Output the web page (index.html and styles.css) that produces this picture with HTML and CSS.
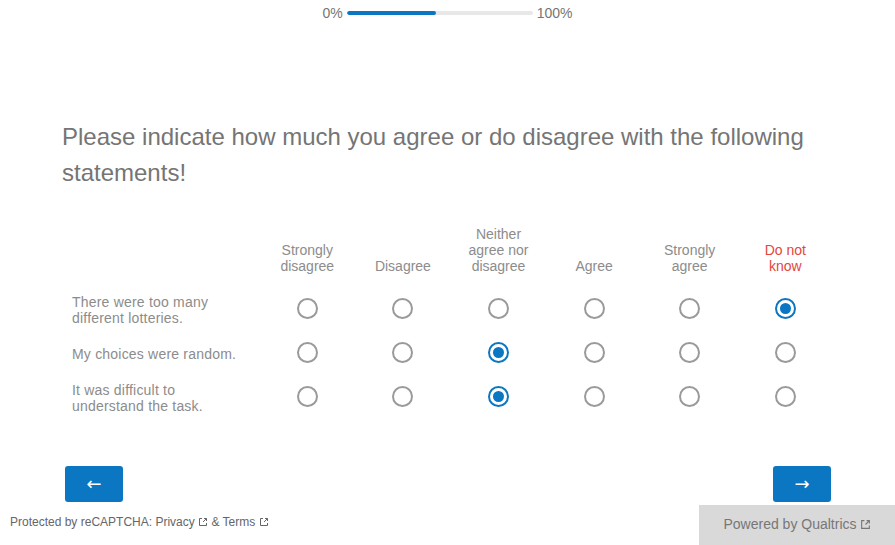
FILE: index.html
```html
<!DOCTYPE html>
<html lang="en">
<head>
<meta charset="utf-8">
<title>Survey</title>
<link rel="stylesheet" href="styles.css">
</head>
<body>
<div class="page">
  <div class="progress">
    <span class="pct">0%</span>
    <div class="bar"><div class="fill" style="width:48%"></div></div>
    <span class="pct">100%</span>
  </div>

  <main class="survey">
    <h1 class="question">Please indicate how much you agree or do disagree with the following statements!</h1>

    <div class="matrix">
      <div class="cell head-blank"></div>
      <div class="cell head">Strongly disagree</div>
      <div class="cell head">Disagree</div>
      <div class="cell head">Neither agree nor disagree</div>
      <div class="cell head">Agree</div>
      <div class="cell head">Strongly agree</div>
      <div class="cell head dnk">Do not know</div>

      <div class="cell label">There were too many different lotteries.</div>
      <div class="cell opt"><span class="radio"></span></div>
      <div class="cell opt"><span class="radio"></span></div>
      <div class="cell opt"><span class="radio"></span></div>
      <div class="cell opt"><span class="radio"></span></div>
      <div class="cell opt"><span class="radio"></span></div>
      <div class="cell opt"><span class="radio on"></span></div>

      <div class="cell label">My choices were random.</div>
      <div class="cell opt"><span class="radio"></span></div>
      <div class="cell opt"><span class="radio"></span></div>
      <div class="cell opt"><span class="radio on"></span></div>
      <div class="cell opt"><span class="radio"></span></div>
      <div class="cell opt"><span class="radio"></span></div>
      <div class="cell opt"><span class="radio"></span></div>

      <div class="cell label">It was difficult to understand the task.</div>
      <div class="cell opt"><span class="radio"></span></div>
      <div class="cell opt"><span class="radio"></span></div>
      <div class="cell opt"><span class="radio on"></span></div>
      <div class="cell opt"><span class="radio"></span></div>
      <div class="cell opt"><span class="radio"></span></div>
      <div class="cell opt"><span class="radio"></span></div>
    </div>

    <div class="nav">
      <button class="navbtn" type="button">&larr;</button>
      <button class="navbtn" type="button">&rarr;</button>
    </div>
  </main>

  <footer class="footer">
    <div class="recaptcha">Protected by reCAPTCHA: Privacy <svg class="ext" viewBox="0 0 10 10" width="10" height="10"><path d="M4 1.5H1.5v7h7V6" fill="none" stroke="currentColor" stroke-width="1"/><path d="M6 1.5h2.5V4M8.5 1.5L5 5" fill="none" stroke="currentColor" stroke-width="1"/></svg> &amp; Terms <svg class="ext" viewBox="0 0 10 10" width="10" height="10"><path d="M4 1.5H1.5v7h7V6" fill="none" stroke="currentColor" stroke-width="1"/><path d="M6 1.5h2.5V4M8.5 1.5L5 5" fill="none" stroke="currentColor" stroke-width="1"/></svg></div>
    <div class="powered">Powered by Qualtrics <svg class="ext" viewBox="0 0 10 10" width="11" height="11"><path d="M4 1.5H1.5v7h7V6" fill="none" stroke="currentColor" stroke-width="1"/><path d="M6 1.5h2.5V4M8.5 1.5L5 5" fill="none" stroke="currentColor" stroke-width="1"/></svg></div>
  </footer>
</div>
</body>
</html>
```

FILE: styles.css
```css
* { box-sizing: border-box; }
html, body { margin: 0; padding: 0; background: #fff; }
body {
  font-family: "Liberation Sans", Arial, sans-serif;
  width: 895px;
  height: 545px;
  overflow: hidden;
}
.page {
  display: flex;
  flex-direction: column;
  height: 545px;
}
.progress {
  display: flex;
  align-items: center;
  justify-content: center;
  gap: 4px;
  height: 26px;
  font-size: 14px;
  color: #757575;
}
.bar {
  width: 186px;
  height: 4px;
  border-radius: 2px;
  background: #e8e8e8;
  overflow: hidden;
}
.fill {
  height: 4px;
  background: #0b76c1;
  border-radius: 2px;
}
.survey {
  width: 773px;
  margin-left: 62px;
  padding-top: 93px;
}
.question {
  margin: 0;
  font-weight: normal;
  font-size: 24px;
  line-height: 36px;
  color: #757575;
}
.matrix {
  margin-top: 35px;
  display: grid;
  grid-template-columns: 197.5px repeat(6, 95.6px);
  grid-auto-rows: 44px;
  grid-template-rows: 60px;
}
.cell {
  display: flex;
  align-items: center;
  justify-content: center;
}
.head {
  align-items: flex-end;
  text-align: center;
  padding: 0 10px 12px;
  font-size: 14px;
  line-height: 16px;
  color: #8c8c8c;
  height: 60px;
}
.head.dnk { color: #e5463c; }
.label {
  justify-content: flex-start;
  padding: 3px 20px 0 10px;
  font-size: 14px;
  line-height: 16px;
  letter-spacing: 0.2px;
  color: #8c8c8c;
}
.radio {
  width: 21px;
  height: 21px;
  border-radius: 50%;
  border: 2px solid #9a9a9a;
  display: flex;
  align-items: center;
  justify-content: center;
}
.radio.on {
  border-color: #0b76c1;
}
.radio.on::after {
  content: "";
  width: 11px;
  height: 11px;
  border-radius: 50%;
  background: #0b76c1;
}
.nav {
  margin-top: 48px;
  display: flex;
  justify-content: space-between;
  padding: 0 4px 0 3px;
}
.navbtn {
  width: 58px;
  height: 36px;
  border: none;
  border-radius: 3px;
  background: #0b76c1;
  color: #fff;
  font-family: "DejaVu Sans", sans-serif;
  font-size: 18px;
  line-height: 36px;
  padding: 0;
}
.footer {
  margin-top: auto;
  display: flex;
  justify-content: space-between;
  align-items: flex-end;
}
.recaptcha {
  font-size: 12px;
  color: #666;
  padding: 0 0 16px 10px;
}
.ext { vertical-align: -1px; }
.powered {
  width: 196px;
  height: 40px;
  padding-bottom: 2px;
  background: #d9d9d9;
  color: #777;
  font-size: 14px;
  display: flex;
  align-items: center;
  justify-content: center;
  gap: 3px;
}
```
